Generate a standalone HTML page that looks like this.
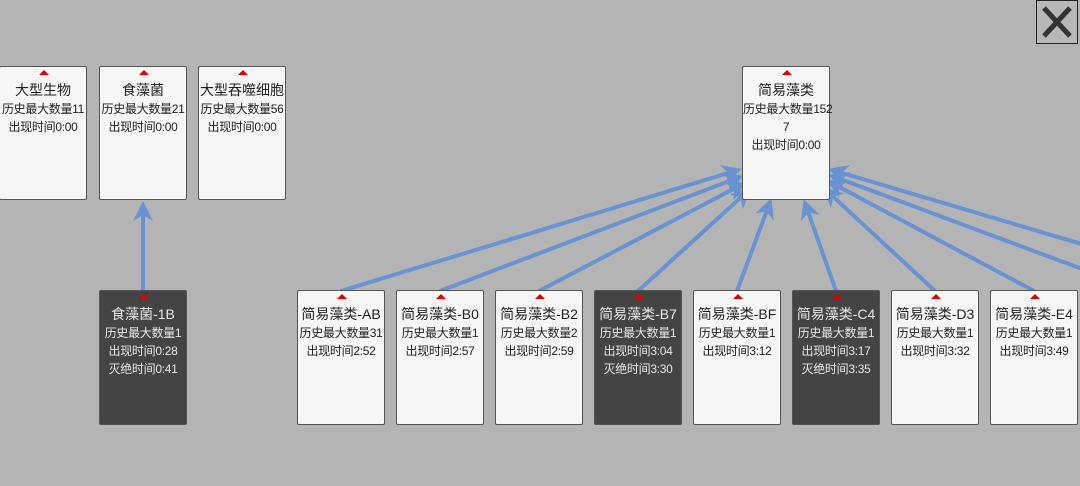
<!DOCTYPE html>
<html><head><meta charset="utf-8"><style>
body{margin:0;width:1080px;height:486px;background:#b4b4b4;overflow:hidden;position:relative;font-family:"Liberation Sans","Noto Sans CJK SC",sans-serif}
.c{position:absolute;width:88px;background:#f6f6f6;border:1px solid #555;border-radius:2px;box-sizing:border-box;text-align:center;color:#222;font-size:12px;line-height:18px;white-space:nowrap;letter-spacing:-0.3px}
.c.d{background:#444;color:#e8e8e8}
.c:before{content:"";position:absolute;left:39px;top:3px;border-left:5px solid transparent;border-right:5px solid transparent;border-bottom:5px solid #d00}
.c .t{font-size:14px;margin-top:13px;line-height:20px;letter-spacing:0}
.top{top:66px;height:134px}
.bot{top:290px;height:135px}
svg{position:absolute;left:0;top:0}
.x{position:absolute;left:1036px;top:0;width:42px;height:44px;border:1px solid #222;box-sizing:border-box;background:#b8b8b8}
</style></head><body>
<svg width="1080" height="486">
<defs><marker id="a" viewBox="0 0 10 10" refX="8" refY="5" markerWidth="5" markerHeight="5" orient="auto"><path d="M0,0 L10,5 L0,10 L3,5z" fill="#6892d2"/></marker></defs>
<g stroke="#6892d2" stroke-width="4" marker-end="url(#a)" fill="none">
<line x1="143" y1="291" x2="143" y2="205"/>
<line x1="341" y1="291" x2="738" y2="170"/>
<line x1="440" y1="291" x2="740" y2="177"/>
<line x1="539" y1="291" x2="743" y2="184"/>
<line x1="638" y1="291" x2="748" y2="191"/>
<line x1="737" y1="291" x2="770" y2="202"/>
<line x1="836" y1="291" x2="805" y2="203"/>
<line x1="935" y1="291" x2="826" y2="190"/>
<line x1="1034" y1="291" x2="830" y2="182"/>
<line x1="1085" y1="270" x2="832" y2="176"/>
<line x1="1085" y1="245" x2="832" y2="170"/>
</g></svg>
<div class="c top" style="left:-1px"><div class="t">大型生物</div>历史最大数量11<br>出现时间0:00</div>
<div class="c top" style="left:99px"><div class="t">食藻菌</div>历史最大数量21<br>出现时间0:00</div>
<div class="c top" style="left:198px"><div class="t">大型吞噬细胞</div>历史最大数量56<br>出现时间0:00</div>
<div class="c top" style="left:742px"><div class="t">简易藻类</div>历史最大数量152<br>7<br>出现时间0:00</div>
<div class="c bot d" style="left:99px"><div class="t">食藻菌-1B</div>历史最大数量1<br>出现时间0:28<br>灭绝时间0:41</div>
<div class="c bot" style="left:297px"><div class="t">简易藻类-AB</div>历史最大数量31<br>出现时间2:52</div>
<div class="c bot" style="left:396px"><div class="t">简易藻类-B0</div>历史最大数量1<br>出现时间2:57</div>
<div class="c bot" style="left:495px"><div class="t">简易藻类-B2</div>历史最大数量2<br>出现时间2:59</div>
<div class="c bot d" style="left:594px"><div class="t">简易藻类-B7</div>历史最大数量1<br>出现时间3:04<br>灭绝时间3:30</div>
<div class="c bot" style="left:693px"><div class="t">简易藻类-BF</div>历史最大数量1<br>出现时间3:12</div>
<div class="c bot d" style="left:792px"><div class="t">简易藻类-C4</div>历史最大数量1<br>出现时间3:17<br>灭绝时间3:35</div>
<div class="c bot" style="left:891px"><div class="t">简易藻类-D3</div>历史最大数量1<br>出现时间3:32</div>
<div class="c bot" style="left:990px"><div class="t">简易藻类-E4</div>历史最大数量1<br>出现时间3:49</div>
<div class="x"><svg width="40" height="42"><path d="M7,7 L33,35 M33,7 L7,35" stroke="#333" stroke-width="5"/></svg></div>
</body></html>
